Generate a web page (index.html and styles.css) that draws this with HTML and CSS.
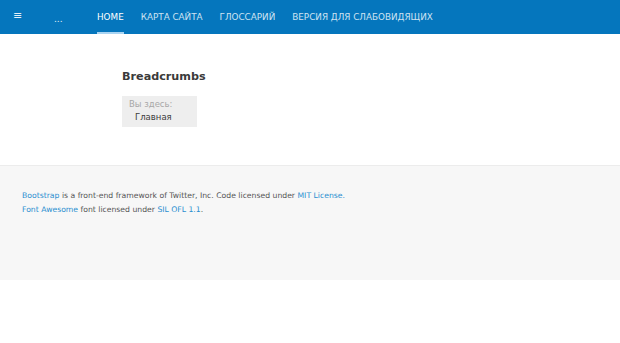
FILE: index.html
```html
<!DOCTYPE html>
<html lang="ru">
<head>
<meta charset="utf-8">
<title>Breadcrumbs</title>
<link rel="stylesheet" href="styles.css">
</head>
<body>
<header class="navbar">
  <span class="burger">&#8801;</span>
  <span class="dots">...</span>
  <nav class="menu">
    <a class="item active" href="#">HOME</a>
    <a class="item" href="#">КАРТА САЙТА</a>
    <a class="item" href="#">ГЛОССАРИЙ</a>
    <a class="item" href="#">ВЕРСИЯ ДЛЯ СЛАБОВИДЯЩИХ</a>
  </nav>
</header>
<main class="content">
  <h1 class="title">Breadcrumbs</h1>
  <div class="crumbs">
    <div class="here">Вы здесь:</div>
    <div class="crumb">Главная</div>
  </div>
</main>
<footer class="footer">
  <p class="line"><a href="#">Bootstrap</a> is a front-end framework of Twitter, Inc. Code licensed under <a href="#">MIT License.</a></p>
  <p class="line"><a href="#">Font Awesome</a> font licensed under <a href="#">SIL OFL 1.1</a>.</p>
</footer>
</body>
</html>
```
FILE: styles.css
```css
html, body {
  margin: 0;
  padding: 0;
  background: #fff;
  font-family: "DejaVu Sans", sans-serif;
}
.navbar {
  height: 34px;
  background: #0576bd;
  display: flex;
  align-items: stretch;
  color: #dbeaf5;
}
.burger {
  width: 18px;
  margin-left: 13px;
  font-size: 11px;
  line-height: 32px;
  color: #e6f0f8;
}
.dots {
  width: 30px;
  margin-left: 23px;
  font-size: 9px;
  line-height: 38px;
  color: #e6f0f8;
}
.menu {
  display: flex;
  gap: 17px;
  margin-left: 13px;
}
.item {
  display: flex;
  align-items: center;
  font-size: 8.8px;
  color: #cfe3f2;
  text-decoration: none;
  border-bottom: 2px solid transparent;
  padding-top: 2px;
}
.item.active {
  color: #ffffff;
  border-bottom-color: #a9d4f2;
}
.content {
  padding: 35px 0 0 122px;
  height: 96px;
}
.title {
  margin: 0 0 11px;
  font-size: 11.2px;
  font-weight: bold;
  color: #3a3a3a;
  line-height: 16px;
}
.crumbs {
  width: 75px;
  height: 31px;
  background: #eeeeee;
  box-sizing: border-box;
  padding: 2px 0 0 7px;
  font-size: 8.5px;
  line-height: 13px;
}
.here {
  color: #a8a8a8;
}
.crumb {
  color: #3c3c3c;
  padding-left: 6px;
}
.footer {
  height: 115px;
  box-sizing: border-box;
  border-top: 1px solid #ececec;
  background: #f7f7f7;
  padding: 23px 0 0 22px;
}
.line {
  margin: 0;
  font-size: 7.7px;
  line-height: 14px;
  color: #555555;
}
.line a {
  color: #2a8fd0;
  text-decoration: none;
}
```
